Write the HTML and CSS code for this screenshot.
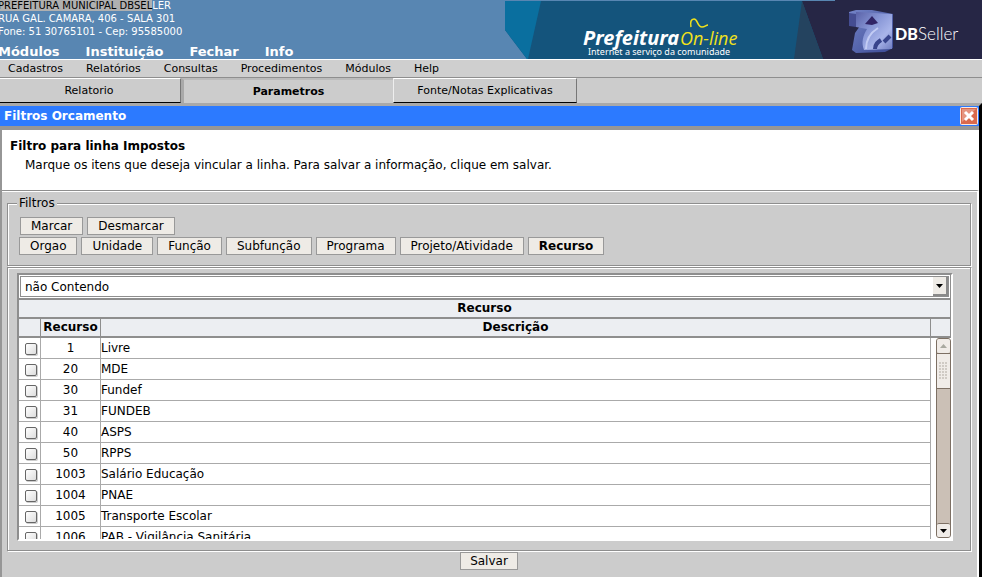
FILE: index.html
```html
<!DOCTYPE html>
<html lang="pt-BR">
<head>
<meta charset="utf-8">
<title>Filtros Orcamento</title>
<link rel="stylesheet" href="styles.css">
</head>
<body>
<header class="top">
  <div class="top-info">
    <address class="org"><span class="org-line"><mark>PREFEITURA MUNICIPAL DBSEL</mark>LER</span><span class="org-line">RUA GAL. CAMARA, 406 - SALA 301</span><span class="org-line">Fone: 51 30765101 - Cep: 95585000</span></address>
    <nav class="main-nav"><a href="#">Módulos</a><a href="#">Instituição</a><a href="#">Fechar</a><a href="#">Info</a></nav>
  </div>
  <svg class="banner" width="477" height="59" viewBox="0 0 477 59" role="img" aria-label="Prefeitura On-line DBSeller">
    <defs>
      <linearGradient id="cube" x1="0" y1="0" x2="1" y2="1">
        <stop offset="0" stop-color="#5a62a8"/><stop offset=".4" stop-color="#8796d6"/><stop offset=".7" stop-color="#a9b5ea"/><stop offset="1" stop-color="#6f7cc0"/>
      </linearGradient>
      <linearGradient id="side" x1="0" y1="0" x2="1" y2="1">
        <stop offset="0" stop-color="#7484c8"/><stop offset="1" stop-color="#3b4a94"/>
      </linearGradient>
    </defs>
    <path fill="#14547c" d="M0 1h330V0h147v59H22L0 30z"/>
    <path fill="#0a6f9f" d="M0 1h36L23 59h-1L0 30z"/>
    <path fill="#262645" d="M297 1h33V0h147v59H318z"/>
    <path fill="#24435f" d="M297 1l21 58h-29z"/>
    <path fill="url(#side)" d="M344 12l7-2h16l21 4v34l-8 4-29 1-4-3 3-17 5-7-10-1z"/>
    <path fill="url(#cube)" d="M351 12l36 2v35l-28 1c-3-8-1-14 3-21l-11-2z"/>
    <path fill="#454d92" d="M344 13l7 1v13l-7-1z"/>
    <path fill="#302466" d="M367 16l6 7-6 2-7-1z"/>
    <path fill="none" stroke="#c3ccf4" stroke-width="2" d="M361 49c0-9 4-16 12-21"/>
    <path fill="none" stroke="#38448c" stroke-width="4" d="M370 49c0-5 3-7 6-9M379 42l6-6"/>
    <text class="brand" x="78" y="45">Prefeitura</text>
    <text class="brand-alt" x="175" y="45">On-line</text>
    <path fill="none" stroke="#f2e21b" stroke-width="1.500" d="M186 27c-1-5 0-8 3-8 4 0 3 8 8 8 3 0 4-2 6-2"/>
    <text class="slogan" x="83" y="55">Internet a serviço da comunidade</text>
    <text class="db" x="390" y="40">DB</text>
    <text class="seller" x="413" y="40">Seller</text>
  </svg>
</header>
<nav class="menu"><a href="#">Cadastros</a><a href="#">Relatórios</a><a href="#">Consultas</a><a href="#">Procedimentos</a><a href="#">Módulos</a><a href="#">Help</a></nav>
<div class="tabs">
  <button class="tab">Relatorio</button>
  <button class="tab tab-active">Parametros</button>
  <button class="tab">Fonte/Notas Explicativas</button>
</div>
<main class="window">
  <div class="title-bar">
    <span>Filtros Orcamento</span>
    <button class="close" aria-label="Fechar janela"><svg width="18" height="18" viewBox="0 0 18 18"><rect x=".5" y=".5" width="17" height="17" rx="1" fill="#d9694c" stroke="#fbe9e2"/><path d="M2 2h14L2 15z" fill="#e59580"/><path d="M5 5l8 8M13 5l-8 8" stroke="#fff" stroke-width="3"/></svg></button>
  </div>
  <div class="content">
    <section class="intro">
      <h1>Filtro para linha Impostos</h1>
      <p>Marque os itens que deseja vincular a linha. Para salvar a informação, clique em salvar.</p>
    </section>
    <form class="form">
      <fieldset class="filters">
        <legend>Filtros</legend>
        <div class="row row-mark"><button type="button" class="btn">Marcar</button><button type="button" class="btn">Desmarcar</button></div>
        <div class="row"><button type="button" class="btn">Orgao</button><button type="button" class="btn">Unidade</button><button type="button" class="btn">Função</button><button type="button" class="btn">Subfunção</button><button type="button" class="btn">Programa</button><button type="button" class="btn">Projeto/Atividade</button><button type="button" class="btn btn-on">Recurso</button></div>
      </fieldset>
      <fieldset class="list">
        <div class="grid">
          <div class="select-wrap">
            <select aria-label="Condição"><option>não Contendo</option><option>Contendo</option></select>
            <span class="arrow"><svg width="7" height="4" viewBox="0 0 7 4"><path d="M0 0h7L3.500 4z"/></svg></span>
          </div>
          <div class="caption">Recurso</div>
          <div class="heads"><span></span><span>Recurso</span><span>Descrição</span><span></span></div>
          <div class="body">
            <div class="scroll">
              <table aria-label="Recurso">
                <colgroup><col class="c-check"><col class="c-code"><col></colgroup>
                <tbody>
                <tr><td><input type="checkbox" aria-label="Livre"></td><td>1</td><td>Livre</td></tr>
                <tr><td><input type="checkbox" aria-label="MDE"></td><td>20</td><td>MDE</td></tr>
                <tr><td><input type="checkbox" aria-label="Fundef"></td><td>30</td><td>Fundef</td></tr>
                <tr><td><input type="checkbox" aria-label="FUNDEB"></td><td>31</td><td>FUNDEB</td></tr>
                <tr><td><input type="checkbox" aria-label="ASPS"></td><td>40</td><td>ASPS</td></tr>
                <tr><td><input type="checkbox" aria-label="RPPS"></td><td>50</td><td>RPPS</td></tr>
                <tr><td><input type="checkbox" aria-label="Salário Educação"></td><td>1003</td><td>Salário Educação</td></tr>
                <tr><td><input type="checkbox" aria-label="PNAE"></td><td>1004</td><td>PNAE</td></tr>
                <tr><td><input type="checkbox" aria-label="Transporte Escolar"></td><td>1005</td><td>Transporte Escolar</td></tr>
                <tr><td><input type="checkbox" aria-label="PAB - Vigilância Sanitária"></td><td>1006</td><td>PAB - Vigilância Sanitária</td></tr>
                </tbody>
              </table>
            </div>
            <div class="bar">
              <span class="bar-end bar-up"><svg width="7" height="4" viewBox="0 0 7 4"><path fill="#a9a9a0" d="M0 4h7L3.500 0z"/></svg></span>
              <span class="thumb"><svg width="9" height="18" viewBox="0 0 9 18"><path stroke="#d0cbc5" stroke-width="2" stroke-dasharray="2 1" d="M1 0v18M4 0v18M7 0v18"/></svg></span>
              <span class="bar-end bar-down"><svg width="7" height="4" viewBox="0 0 7 4"><path d="M0 0h7L3.500 4z"/></svg></span>
            </div>
          </div>
        </div>
      </fieldset>
      <div class="actions"><button type="button" class="btn">Salvar</button></div>
    </form>
  </div>
</main>
</body>
</html>
```
FILE: styles.css
```css
* { box-sizing: border-box; }
body {
  margin: 0;
  min-height: 100vh;
  display: flex;
  flex-direction: column;
  overflow: hidden;
  background: #ccc;
  color: #000;
  font: 12px/16px "DejaVu Sans", Verdana, sans-serif;
}
a { color: inherit; text-decoration: none; }
button, select { font: inherit; color: inherit; margin: 0; }

.top {
  display: flex;
  justify-content: space-between;
  height: 59px;
  background: #5886b2;
  color: #fff;
  overflow: hidden;
}
.top-info { display: flex; flex-direction: column; justify-content: space-between; margin-left: -2px; }
.org { margin-top: -1px; font-size: 10px; font-style: normal; line-height: 13px; }
.org-line { display: block; white-space: nowrap; height: 13px; }
.org-line mark { background: #b0b0b0; color: #000; }
.main-nav { display: flex; gap: 26px; font-size: 13px; font-weight: bold; line-height: 14px; }
.banner { display: block; flex: none; }
.brand { font: italic bold 20px "Noto Sans", sans-serif; fill: #fff; }
.brand-alt { font: italic 18px "Open Sans", sans-serif; fill: #f2e21b; }
.slogan { font: 9px "Noto Sans", sans-serif; fill: #fff; }
.db { font: 900 16px Lato, sans-serif; fill: #fff; }
.seller { font: 300 17px Lato, sans-serif; fill: #fff; }

.menu {
  display: flex;
  gap: 23px;
  height: 19px;
  padding: 0 8px;
  border-top: 1px solid #fff;
  border-bottom: 1px solid #8e8e8e;
  background: #cfcfcf;
  font-size: 11px;
  line-height: 17px;
}
.tabs { display: flex; height: 25px; font-size: 11px; }
.tab {
  width: 184px;
  padding: 0;
  border: 1px solid;
  border-color: #fff #777 #000 #eee;
  background: #ccc;
  line-height: 20px;
}
.tab:first-child { width: 181px; border-left: 0; padding-right: 2px; }
.tab-active {
  width: 212px;
  border-width: 2px 0 0 3px;
  border-color: #bbb #999 #ccc #a9a9a9;
  font-weight: bold;
}

.window {
  flex: 1;
  display: flex;
  flex-direction: column;
  border-top: 3px solid #a9a9a9;
  border-right: 3px solid #000;
}
.title-bar {
  display: flex;
  align-items: center;
  justify-content: space-between;
  height: 20px;
  padding: 0 1px 0 4px;
  background: #2c7aff;
  color: #fff;
  font-weight: bold;
}
.close { display: flex; padding: 0; border: 0; background: none; }
.content {
  flex: 1;
  display: flex;
  flex-direction: column;
  border: solid #969696;
  border-width: 4px 0 0 2px;
}
.intro {
  height: 60px;
  padding: 8px;
  background: #fff;
}
h1 { margin: 0 0 3px; font-size: 12px; line-height: 16px; }
.intro p { margin: 0; padding-left: 15px; }
.form {
  flex: 1;
  padding: 4px 6px 0 5px;
  border-top: 1px solid #8e8e8e;
  border-right: 2px solid #fff;
  box-shadow: inset 0 1px #fff;
}
fieldset {
  margin: 0 0 1px;
  min-width: 0;
  border: 1px solid #8e8e8e;
  box-shadow: 1px 1px #fff, inset 1px 1px #fff;
}
.filters { padding: 6px 11px 8px; }
legend { margin-left: -2px; padding: 0 2px; background: #ccc; }
.row { display: flex; gap: 4px; margin-bottom: 2px; }
.row-mark { padding-left: 1px; }
.btn {
  height: 18px;
  padding: 0 10px;
  border: 1px solid #999;
  background: #eeebe6;
  line-height: 16px;
  white-space: nowrap;
}
.actions .btn { padding: 0 9px; }
.btn-on { font-weight: bold; }
.list { padding: 5px 17px 9px 9px; }
.grid {
  border: 2px solid;
  border-color: #8e8e8e #fff #fff #8e8e8e;
  background: #fff;
}
.select-wrap {
  position: relative;
  height: 23px;
  padding: 1px;
  border-right: 1px solid #8e8e8e;
}
select {
  display: block;
  width: 100%;
  height: 21px;
  padding: 0 4px;
  appearance: none;
  border: 1px solid #8e8e8e;
  border-radius: 0;
  background: #fff;
}
.arrow {
  position: absolute;
  top: 2px;
  right: 2px;
  display: flex;
  align-items: center;
  justify-content: center;
  width: 15px;
  height: 19px;
  border: solid #8a8a8a;
  border-width: 0 2px 2px 0;
  background: #eeebe6;
  pointer-events: none;
}
.caption, .heads {
  border: solid #8e8e8e;
  border-width: 2px 1px 0 0;
  background: #eceef2;
  height: 19px;
  line-height: 17px;
  font-weight: bold;
  text-align: center;
}
.heads { display: grid; grid-template-columns: 21px 60px 1fr 20px; height: 21px; border-bottom-width: 2px; }
.heads span + span { border-left: 1px solid #8e8e8e; }
.body { display: flex; height: 201px; }
.scroll { flex: 1; overflow-y: auto; scrollbar-width: none; }
table { width: 100%; table-layout: fixed; border-spacing: 0; }
.c-check { width: 22px; }
.c-code { width: 60px; }
td {
  height: 21px;
  padding: 0;
  border: solid #aaa;
  border-width: 0 1px 1px 0;
  white-space: nowrap;
}
td:nth-child(2) { text-align: center; }
input {
  display: block;
  width: 12px;
  height: 12px;
  margin: 1px 3px 0 auto;
  appearance: none;
  border: 1px solid #666;
  border-radius: 2px;
  background: linear-gradient(135deg, #fff, #ddd);
  box-shadow: 1px 1px #ccc;
}
.bar {
  display: flex;
  flex-direction: column;
  width: 15px;
  margin: 0 0 1px 5px;
  border: 1px solid #7d7064;
  border-radius: 3px;
  background: #cbc0b6;
}
.bar-end, .thumb { display: flex; align-items: center; justify-content: center; background: #f0ece8; }
.bar-end { height: 14px; border-radius: 2px; }
.thumb { height: 36px; border: solid #7d7064; border-width: 1px 0; }
.bar-down { margin-top: auto; border-top: 1px solid #7d7064; }
.actions { display: flex; justify-content: center; }
```
